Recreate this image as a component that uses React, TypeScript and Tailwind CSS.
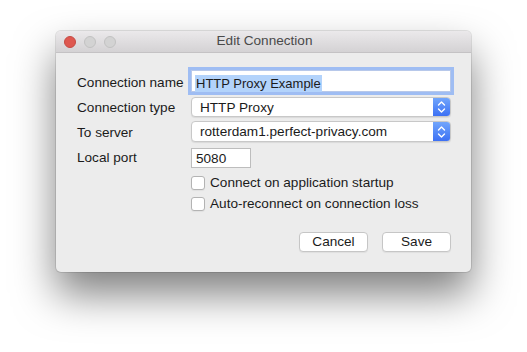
import React from "react";

function Chevrons() {
  return (
    <svg width="9" height="14" viewBox="0 0 9 14" fill="none">
      <path d="M1.5 5 L4.5 2 L7.5 5" stroke="white" strokeWidth="1.4" strokeLinecap="round" strokeLinejoin="round" />
      <path d="M1.5 9 L4.5 12 L7.5 9" stroke="white" strokeWidth="1.4" strokeLinecap="round" strokeLinejoin="round" />
    </svg>
  );
}

function Popup({ value, h }: { value: string; h: string }) {
  return (
    <div
      className={`flex flex-1 ${h} rounded-[4px] border border-[#c8c8c8] bg-white shadow-[0_1px_1px_rgba(0,0,0,0.08)] overflow-hidden`}
    >
      <span className="flex-1 pl-[8px] pt-[1px] leading-[18px]">{value}</span>
      <span className="flex w-[17px] items-center justify-center bg-gradient-to-b from-[#72a5fb] to-[#3d70f4]">
        <Chevrons />
      </span>
    </div>
  );
}

function Check({ label, mt }: { label: string; mt: string }) {
  return (
    <div className={`flex h-[14px] items-center ${mt} pl-[114px]`}>
      <span className="h-[14px] w-[14px] shrink-0 rounded-[3px] border border-[#b3b3b3] bg-white shadow-[0_1px_1px_rgba(0,0,0,0.05)]" />
      <span className="ml-[5px] whitespace-nowrap">{label}</span>
    </div>
  );
}

export default function App() {
  return (
    <div className="h-[352px] w-[527px] overflow-hidden bg-white pl-[56px] pt-[31px] font-['Liberation_Sans',Arial,sans-serif] text-[13.6px] text-[#1b1b1b]">
      <div className="flex h-[241px] w-[415px] flex-col rounded-[5px] bg-[#ececec] shadow-[0_22px_42px_rgba(0,0,0,0.5),0_0_0_1px_rgba(0,0,0,0.1)]">
        <div className="relative flex h-[22px] items-center rounded-t-[5px] border-b border-[#c4c2c4] bg-gradient-to-b from-[#ebe9eb] to-[#d4d2d4] pl-[8px]">
          <div className="flex gap-[8px]">
            <span className="h-[12px] w-[12px] rounded-full border border-[#c64b44] bg-[#de5850]" />
            <span className="h-[12px] w-[12px] rounded-full border border-[#c2c2c2] bg-[#d3d3d3]" />
            <span className="h-[12px] w-[12px] rounded-full border border-[#c2c2c2] bg-[#d3d3d3]" />
          </div>
          <span className="flex-1 pr-[58px] text-center text-[#4a4a4a]">Edit Connection</span>
        </div>

        <div className="flex flex-col pl-[21px] pr-[20px]">
          <div className="mt-[17px] flex h-[22px] items-center">
            <span className="w-[114px] whitespace-nowrap pt-[5px]">Connection name</span>
            <div className="flex h-[22px] flex-1 items-center border border-[#b7c8ea] bg-white pl-[3px] pt-[5px] text-[13px] shadow-[0_0_0_3px_#9fbdf3]">
              <span className="bg-[#b3d3fb] px-[1px] leading-[17px]">HTTP Proxy Example</span>
            </div>
          </div>

          <div className="mt-[5px] flex h-[20px] items-center">
            <span className="w-[114px] whitespace-nowrap pt-[3px]">Connection type</span>
            <Popup value="HTTP Proxy" h="h-[20px]" />
          </div>

          <div className="mt-[4px] flex h-[21px] items-center">
            <span className="w-[114px] pt-[4px]">To server</span>
            <Popup value="rotterdam1.perfect-privacy.com" h="h-[21px]" />
          </div>

          <div className="mt-[6px] flex h-[20px] items-center">
            <span className="w-[114px] pt-[1px]">Local port</span>
            <div className="h-[20px] w-[60px] border border-[#bdbdbd] bg-white pl-[4px] leading-[19px]">5080</div>
          </div>

          <Check label="Connect on application startup" mt="mt-[8px]" />
          <Check label="Auto-reconnect on connection loss" mt="mt-[7px]" />

          <div className="mt-[21px] flex justify-end gap-[14px]">
            <button className="h-[20px] w-[69px] rounded-[4px] border border-[#c6c6c6] bg-white leading-[18px] shadow-[0_1px_1px_rgba(0,0,0,0.06)]">
              Cancel
            </button>
            <button className="h-[20px] w-[69px] rounded-[4px] border border-[#c6c6c6] bg-white leading-[18px] shadow-[0_1px_1px_rgba(0,0,0,0.06)]">
              Save
            </button>
          </div>
        </div>
      </div>
    </div>
  );
}
